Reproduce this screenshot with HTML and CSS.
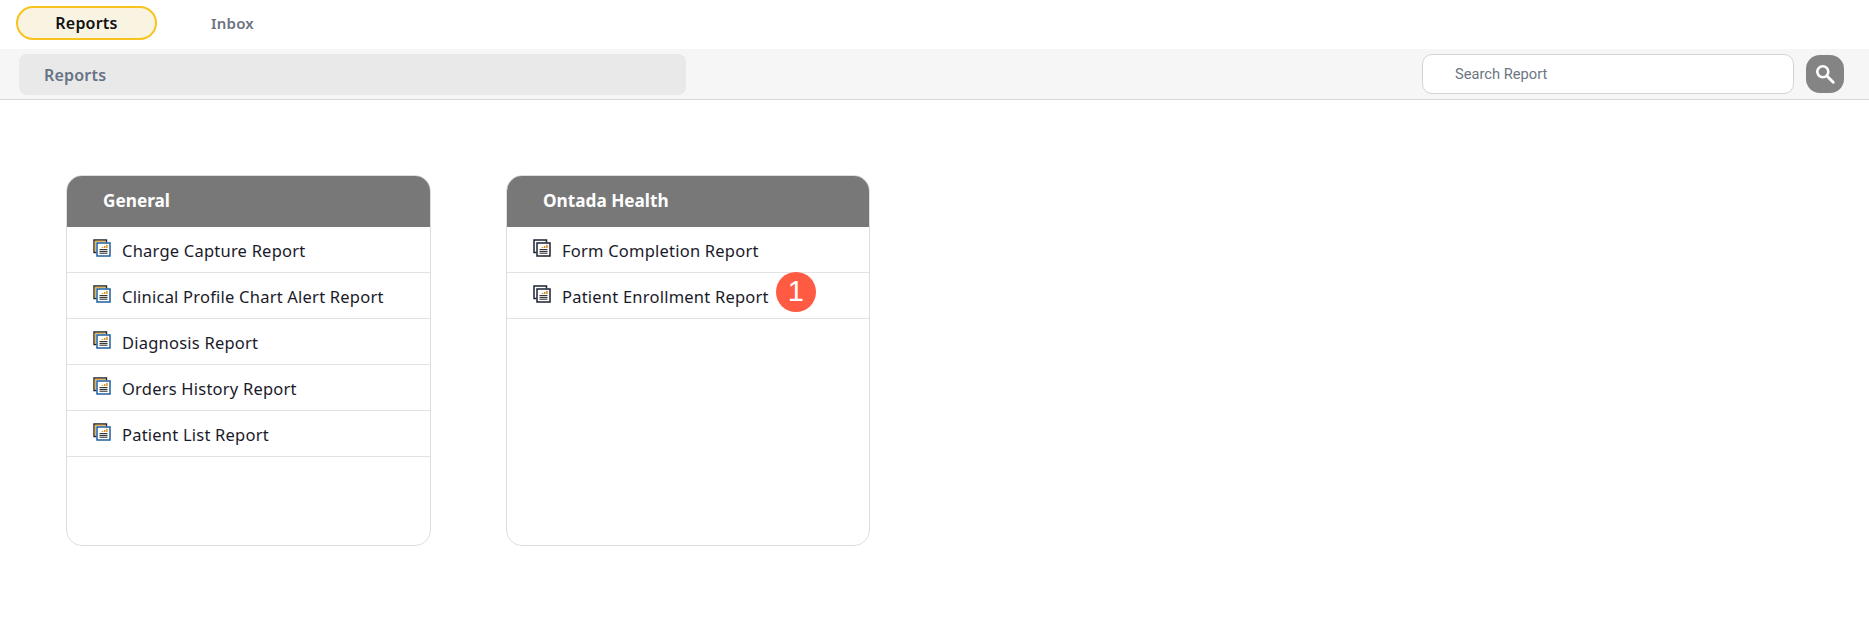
FILE: index.html
```html
<!DOCTYPE html>
<html lang="en">
<head>
<meta charset="utf-8">
<title>Reports</title>
<link rel="stylesheet" href="styles.css">
</head>
<body>
<svg class="defs" width="0" height="0" aria-hidden="true">
  <symbol id="doc-a" viewBox="0 0 18 18">
    <path d="M3.5 13.5H1V1H13.5V3.5" fill="#fff" stroke="#1d2733" stroke-width="1.4"/>
    <path d="M2.2 12.5V2.2H12.5" fill="none" stroke="#d9921c" stroke-width="1"/>
    <rect x="4" y="4" width="13" height="13" fill="#fff" stroke="#1f5f9e" stroke-width="1.5"/>
    <path d="M6.5 14.2H14.5M6.5 12.4H14.5M6.5 10.6H14.5" stroke="#222" stroke-width="1"/>
    <path d="M9.5 9V8M11.7 9V7M13.9 9V5.8" stroke="#d9921c" stroke-width="1.5"/>
  </symbol>
  <symbol id="doc-b" viewBox="0 0 18 18">
    <path d="M3.5 13.5H1V1H13.5V3.5" fill="#fff" stroke="#1c2233" stroke-width="1.5"/>
    <rect x="4" y="4" width="13" height="13" fill="#fff" stroke="#1c2233" stroke-width="1.5"/>
    <path d="M6.5 14.2H14.5M6.5 12.4H14.5M6.5 10.6H14.5" stroke="#222" stroke-width="1"/>
    <path d="M9.5 9V8M11.7 9V7M13.9 9V5.8" stroke="#c9892a" stroke-width="1.5"/>
  </symbol>
</svg>

<nav class="tabs">
  <a class="tab tab-active">Reports</a>
  <a class="tab tab-plain">Inbox</a>
</nav>

<header class="toolbar">
  <div class="crumb">Reports</div>
  <div class="search">
    <div class="search-input">Search Report</div>
    <button class="search-btn" aria-label="Search">
      <svg width="22" height="22" viewBox="0 0 20 20"><circle cx="8" cy="8" r="5" fill="none" stroke="#fff" stroke-width="2.4"/><path d="M12 12L17.5 17.5" stroke="#fff" stroke-width="2.6" stroke-linecap="round"/></svg>
    </button>
  </div>
</header>

<main class="cards">
  <section class="card">
    <h2 class="card-title">General</h2>
    <ul class="list">
      <li class="row"><svg class="doc"><use href="#doc-a"/></svg><span>Charge Capture Report</span></li>
      <li class="row"><svg class="doc"><use href="#doc-a"/></svg><span>Clinical Profile Chart Alert Report</span></li>
      <li class="row"><svg class="doc"><use href="#doc-a"/></svg><span>Diagnosis Report</span></li>
      <li class="row"><svg class="doc"><use href="#doc-a"/></svg><span>Orders History Report</span></li>
      <li class="row"><svg class="doc"><use href="#doc-a"/></svg><span>Patient List Report</span></li>
    </ul>
  </section>
  <section class="card">
    <h2 class="card-title">Ontada Health</h2>
    <ul class="list">
      <li class="row"><svg class="doc"><use href="#doc-b"/></svg><span>Form Completion Report</span></li>
      <li class="row"><svg class="doc"><use href="#doc-b"/></svg><span>Patient Enrollment Report</span><b class="badge">1</b></li>
    </ul>
  </section>
</main>
</body>
</html>
```
FILE: styles.css
```css
* { box-sizing: border-box; }
html, body { margin: 0; padding: 0; background: #fff; }
body { font-family: "Noto Sans", "Open Sans", sans-serif; color: #111; }
.defs { display: block; height: 0; }

.tabs { display: flex; align-items: flex-start; gap: 13px; height: 49px; padding: 6px 0 0 16px; }
.tab { display: flex; align-items: center; justify-content: center; height: 34px; font-size: 16px; font-weight: 600; letter-spacing: 0.2px; width: 141px; border-radius: 17px; }
.tab-active { background: #f9f3e1; border: 2px solid #f9c31d; color: #111; }
.tab-plain { color: #6b7380; width: 125px; font-size: 15px; }

.toolbar { display: flex; align-items: flex-start; justify-content: space-between; height: 51px; background: #f6f6f6; border-bottom: 1px solid #d8d8d8; padding: 5px 25px 0 19px; }
.crumb { width: 667px; height: 41px; display: flex; align-items: center; padding-left: 25px; background: #e9e9e9; border-radius: 8px; font-size: 16px; font-weight: 600; letter-spacing: 0.2px; color: #667385; }
.search { display: flex; align-items: center; gap: 12px; }
.search-input { width: 372px; height: 40px; display: flex; align-items: center; padding-left: 32px; background: #fff; border: 1px solid #d2d4da; border-radius: 10px; font-family: Roboto, sans-serif; font-size: 14.7px; color: #6c7682; }
.search-btn { width: 38px; height: 38px; padding: 0; display: flex; align-items: center; justify-content: center; background: #848484; border: 0; border-radius: 14px; }

.cards { display: flex; gap: 75px; padding: 75px 0 0 66px; }
.card { width: 365px; height: 371px; background: #fff; border: 1px solid #dedede; border-radius: 16px; overflow: hidden; }
.card + .card { width: 364px; }
.card-title { margin: 0; height: 51px; display: flex; align-items: center; padding-left: 36px; padding-bottom: 2px; background: #787878; color: #fff; font-size: 17.2px; font-weight: 700; }
.list { margin: 0; padding: 0; list-style: none; }
.row { display: flex; align-items: center; height: 46px; padding: 2px 0 0 26px; border-bottom: 1px solid #e2e2e2; font-size: 16.5px; letter-spacing: 0.22px; color: #1a1a2a; }
.doc { width: 18px; height: 18px; margin: -6px 11px 0 0; flex: none; }
.badge { width: 40px; height: 40px; margin: -10px 0 0 7px; display: flex; align-items: center; justify-content: center; background: #ff5a42; color: #fff; border-radius: 50%; font-family: "Liberation Sans", sans-serif; font-weight: 400; font-size: 29px; letter-spacing: 0; }
```
